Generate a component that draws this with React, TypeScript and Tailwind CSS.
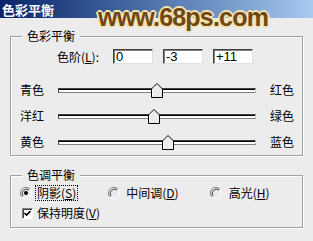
const cjk = { fontFamily: '"Noto Sans CJK SC", "Noto Sans", sans-serif' };

function Track({ value }: { value: number }) {
  // value in -100..100, track is 198px wide
  const left = 99 + value - 6;
  return (
    <div className="relative w-[198px] h-[14px] flex items-center">
      <div className="w-full h-[5px] border border-t-[#404040] border-l-[#404040] border-b-[#808080] border-r-[#c8c8c8] bg-white shadow-[inset_0_1px_0_#000]" />
      <svg
        className="absolute top-0"
        style={{ left }}
        width="12"
        height="15"
        viewBox="0 0 12 15"
      >
        <polygon points="0.5,6 6,0.5 11.5,6 11.5,14.5 0.5,14.5" fill="#ececec" stroke="#000" />
        <polyline points="1.5,13.5 1.5,6.4 6,1.9" fill="none" stroke="#fff" />
      </svg>
    </div>
  );
}

function SliderRow({ left, right, value }: { left: string; right: string; value: number }) {
  return (
    <div className="flex items-center h-[20px]">
      <span className="w-[38px] text-[12px] leading-none">{left}</span>
      <Track value={value} />
      <span className="ml-[14px] text-[12px] leading-none">{right}</span>
    </div>
  );
}

function Radio({ checked }: { checked?: boolean }) {
  return (
    <svg width="12" height="12" viewBox="0 0 12 12">
      <path d="M10 2 A5.5 5.5 0 0 0 2 10" fill="none" stroke="#808080" />
      <path d="M9 3 A4.3 4.3 0 0 0 3 9" fill="none" stroke="#404040" />
      <path d="M2 10 A5.5 5.5 0 0 0 10 2" fill="none" stroke="#ffffff" />
      {checked && <circle cx="6" cy="6" r="2" fill="#000" />}
    </svg>
  );
}

function Group({ label, children, className }: { label: string; children: React.ReactNode; className?: string }) {
  return (
    <div
      className={`relative mx-[10px] border border-[#a0a0a0] shadow-[inset_1px_1px_0_#fff,1px_1px_0_#fff] ${className ?? ""}`}
    >
      <span className="absolute -top-[8px] left-[11px] px-[5px] bg-[#ececec] text-[12px] leading-[14px]">
        {label}
      </span>
      {children}
    </div>
  );
}

function Field({ value }: { value: string }) {
  return (
    <div className="w-[40px] h-[15px] bg-white border border-t-[#404040] border-l-[#404040] border-b-[#e0e0e0] border-r-[#e0e0e0] shadow-[inset_1px_1px_0_#808080] pl-[2px] text-[13px] leading-[13px] font-['Liberation_Sans',sans-serif]">
      {value}
    </div>
  );
}

export default function App() {
  return (
    <div className="relative w-[313px] h-[241px] bg-[#ececec] text-black overflow-hidden" style={cjk}>
      <div className="h-[18px] bg-gradient-to-r from-[#0a246a] to-[#a6caf0] pl-[2px] flex items-center">
        <span className="text-white font-bold text-[13px] leading-none">色彩平衡</span>
      </div>

      <div className="pt-[18px]">
        <Group label="色彩平衡" className="h-[120px] pt-[12px]">
          <div className="flex items-center">
            <span className="ml-[46px] w-[56px] text-[12px] leading-none">
              色阶(<u>L</u>):
            </span>
            <div className="flex gap-[10px]">
              <Field value="0" />
              <Field value="-3" />
              <Field value="+11" />
            </div>
          </div>
          <div className="mt-[16px] pl-[9px] flex flex-col gap-[6px]">
            <SliderRow left="青色" right="红色" value={0} />
            <SliderRow left="洋红" right="绿色" value={-3} />
            <SliderRow left="黄色" right="蓝色" value={11} />
          </div>
        </Group>

        <Group label="色调平衡" className="mt-[19px] h-[53px] pt-[9px]">
          <div className="flex items-center h-[16px] text-[12px] leading-none">
            <div className="ml-[9px] flex items-center">
              <Radio checked />
              <span className="ml-[3px] px-[1px] py-[1px] border border-dotted border-black">
                阴影(<u>S</u>)
              </span>
            </div>
            <div className="ml-[30px] flex items-center">
              <Radio />
              <span className="ml-[6px]">
                中间调(<u>D</u>)
              </span>
            </div>
            <div className="ml-[31px] flex items-center">
              <Radio />
              <span className="ml-[7px]">
                高光(<u>H</u>)
              </span>
            </div>
          </div>
          <div className="mt-[4px] flex items-center h-[16px] text-[12px] leading-none">
            <div className="ml-[11px] w-[11px] h-[11px] bg-white border border-t-[#808080] border-l-[#808080] border-b-white border-r-white shadow-[inset_1px_1px_0_#404040] flex items-center justify-center">
              <svg width="7" height="7" viewBox="0 0 7 7">
                <path d="M0.5 3 L2.5 5 L6.5 1" fill="none" stroke="#000" strokeWidth="1.6" />
              </svg>
            </div>
            <span className="ml-[4px]">
              保持明度(<u>V</u>)
            </span>
          </div>
        </Group>
      </div>

      <div className="absolute left-[98px] top-[5px] font-['Liberation_Sans',sans-serif] font-bold text-[25px] leading-none tracking-[-0.8px] text-[#6e4712] [text-shadow:2px_0_0_#f4e3b2,-2px_0_0_#f4e3b2,0_2px_0_#f4e3b2,0_-2px_0_#f4e3b2,1px_1px_0_#f4e3b2,-1px_-1px_0_#f4e3b2,1px_-1px_0_#f4e3b2,-1px_1px_0_#f4e3b2]">
        www.68ps.com
      </div>
    </div>
  );
}
